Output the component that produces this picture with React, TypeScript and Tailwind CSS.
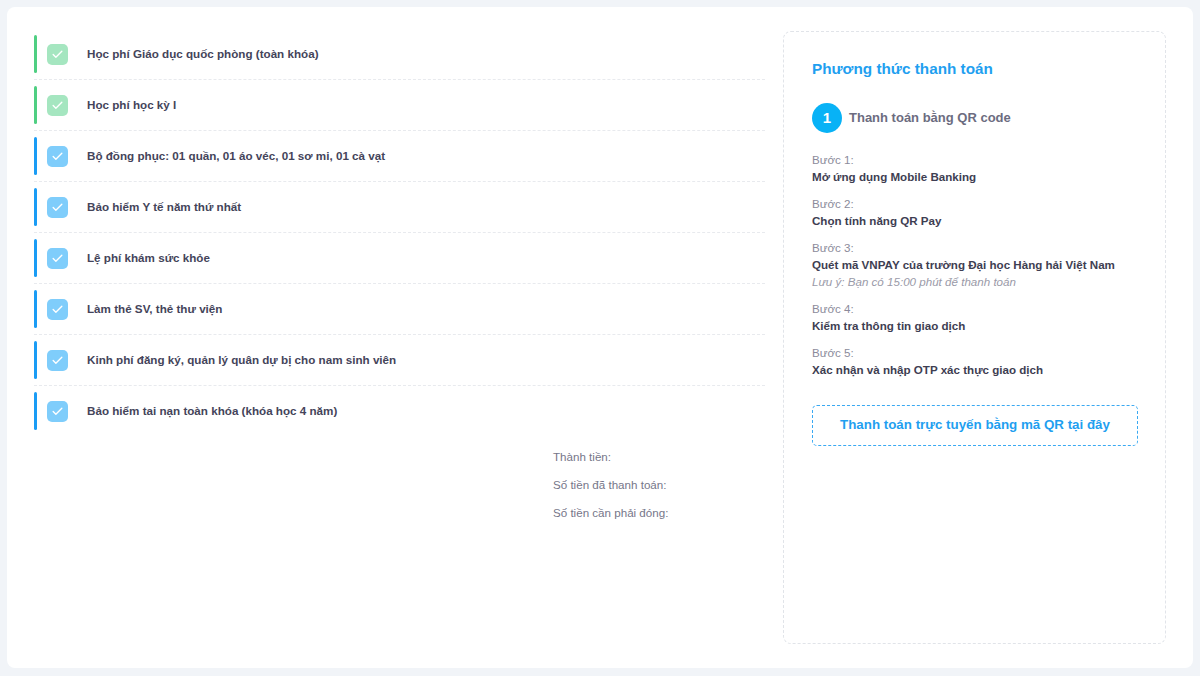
import { Check } from "lucide-react";

const items = [
  { label: "Học phí Giáo dục quốc phòng (toàn khóa)", paid: true },
  { label: "Học phí học kỳ I", paid: true },
  { label: "Bộ đồng phục: 01 quần, 01 áo véc, 01 sơ mi, 01 cà vạt", paid: false },
  { label: "Bảo hiểm Y tế năm thứ nhất", paid: false },
  { label: "Lệ phí khám sức khỏe", paid: false },
  { label: "Làm thẻ SV, thẻ thư viện", paid: false },
  { label: "Kinh phí đăng ký, quản lý quân dự bị cho nam sinh viên", paid: false },
  { label: "Bảo hiểm tai nạn toàn khóa (khóa học 4 năm)", paid: false },
];

const steps = [
  { step: "Bước 1:", text: "Mở ứng dụng Mobile Banking" },
  { step: "Bước 2:", text: "Chọn tính năng QR Pay" },
  { step: "Bước 3:", text: "Quét mã VNPAY của trường Đại học Hàng hải Việt Nam", note: "Lưu ý: Bạn có 15:00 phút để thanh toán" },
  { step: "Bước 4:", text: "Kiểm tra thông tin giao dịch" },
  { step: "Bước 5:", text: "Xác nhận và nhập OTP xác thực giao dịch" },
];

function FeeRow({ label, paid, last }: { label: string; paid: boolean; last: boolean }) {
  return (
    <div className={last ? "pt-[6px] pb-[6px]" : "border-b border-dashed border-[#e8eaee] pt-[6px] pb-[6px]"}>
      <div className="flex h-[38px] items-center">
        <div className={paid ? "h-full w-[3px] rounded-full bg-[#4fcf82]" : "h-full w-[3px] rounded-full bg-[#1a9cf5]"} />
        <div
          className={
            paid
              ? "ml-[10px] flex h-[21px] w-[21px] items-center justify-center rounded-[5px] bg-[#a5e6c0]"
              : "ml-[10px] flex h-[21px] w-[21px] items-center justify-center rounded-[5px] bg-[#7fcdfb]"
          }
        >
          <Check className="h-[13px] w-[13px] text-white" strokeWidth={2.5} />
        </div>
        <span className="ml-[19px] text-[11.65px] font-bold text-[#44445a]">{label}</span>
      </div>
    </div>
  );
}

export default function App() {
  return (
    <div
      className="min-h-screen bg-[#f1f4f8] p-[7px]"
      style={{ fontFamily: '"Liberation Sans", Arial, sans-serif' }}
    >
      <div className="flex h-[661px] rounded-[8px] bg-white pt-[22px] pr-[27px] pb-[24px] pl-[27px]">
        <div className="flex w-[731px] flex-col">
          <div className="flex flex-col">
            {items.map((it, i) => (
              <FeeRow key={it.label} label={it.label} paid={it.paid} last={i === items.length - 1} />
            ))}
          </div>
          <div className="mt-[12px] flex flex-col gap-[10px] pl-[519px] text-[11.6px] leading-[18px] text-[#767689]">
            <span>Thành tiền:</span>
            <span>Số tiền đã thanh toán:</span>
            <span>Số tiền cần phải đóng:</span>
          </div>
        </div>

        <div className="mt-[2px] ml-[18px] flex h-[613px] w-[383px] flex-col rounded-[8px] border border-dashed border-[#e1e4e9] pt-[26px] pl-[28px] pr-[27px]">
          <h2 className="text-[15.3px] font-bold text-[#1f9ff0]">Phương thức thanh toán</h2>
          <div className="mt-[22px] flex items-center">
            <div className="flex h-[30px] w-[30px] items-center justify-center rounded-full bg-[#08b2f6] text-[15px] font-bold text-white">
              1
            </div>
            <span className="ml-[7px] text-[13px] font-bold text-[#6c6c80]">Thanh toán bằng QR code</span>
          </div>
          <div className="mt-[18px] flex flex-col gap-[10px]">
            {steps.map((s) => (
              <div key={s.step} className="flex flex-col">
                <span className="text-[11.6px] leading-[17px] text-[#8b8b9b]">{s.step}</span>
                <span className="text-[11.6px] font-bold leading-[17px] text-[#3e3e52]">{s.text}</span>
                {s.note && (
                  <span className="text-[11.6px] italic leading-[17px] text-[#9a9aa8]">{s.note}</span>
                )}
              </div>
            ))}
          </div>
          <button className="mt-[27px] flex h-[41px] w-[326px] items-center justify-center rounded-[5px] border border-dashed border-[#3aa9f2] text-[13.35px] font-bold text-[#1f9ff0]">
            Thanh toán trực tuyến bằng mã QR tại đây
          </button>
        </div>
      </div>
    </div>
  );
}
